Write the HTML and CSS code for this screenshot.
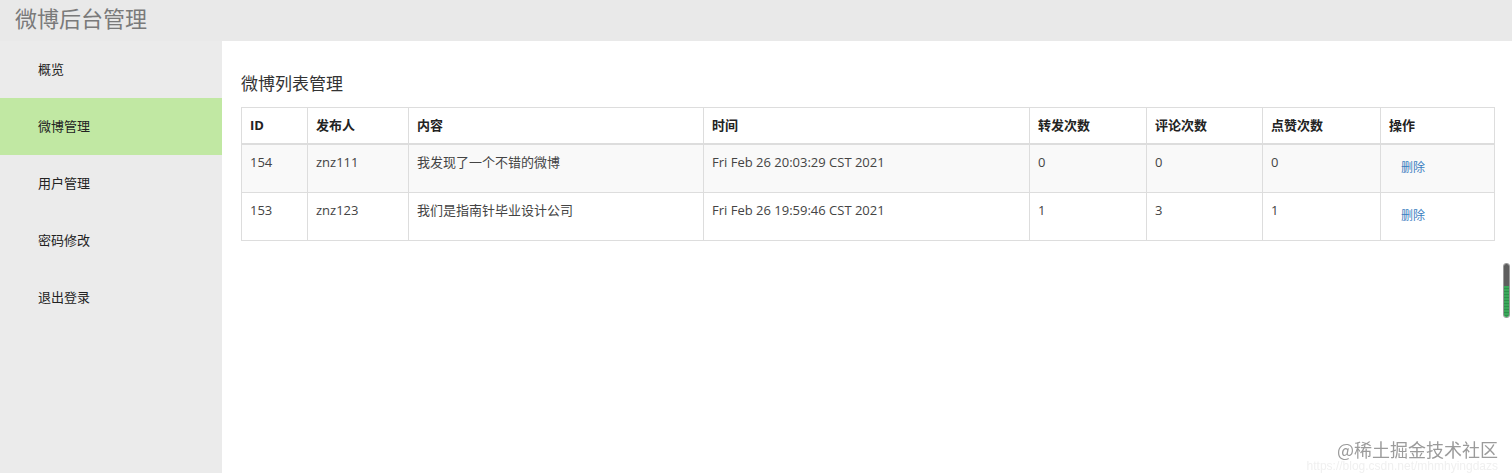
FILE: index.html
```html
<!DOCTYPE html>
<html lang="zh">
<head>
<meta charset="utf-8">
<title>微博后台管理</title>
<link rel="stylesheet" href="styles.css">
</head>
<body>
<header class="topbar"><span class="brand">微博后台管理</span></header>
<div class="layout">
  <nav class="sidebar">
    <a class="nav-item">概览</a>
    <a class="nav-item active">微博管理</a>
    <a class="nav-item">用户管理</a>
    <a class="nav-item">密码修改</a>
    <a class="nav-item">退出登录</a>
  </nav>
  <main class="content">
    <h2 class="page-title">微博列表管理</h2>
    <table class="data-table">
      <colgroup>
        <col class="c-id"><col class="c-user"><col class="c-text"><col class="c-time">
        <col class="c-n1"><col class="c-n2"><col class="c-n3"><col class="c-op">
      </colgroup>
      <thead>
        <tr><th>ID</th><th>发布人</th><th>内容</th><th>时间</th><th>转发次数</th><th>评论次数</th><th>点赞次数</th><th>操作</th></tr>
      </thead>
      <tbody>
        <tr class="odd"><td>154</td><td>znz111</td><td>我发现了一个不错的微博</td><td>Fri Feb 26 20:03:29 CST 2021</td><td>0</td><td>0</td><td>0</td><td><button class="btn-link">删除</button></td></tr>
        <tr><td>153</td><td>znz123</td><td>我们是指南针毕业设计公司</td><td>Fri Feb 26 19:59:46 CST 2021</td><td>1</td><td>3</td><td>1</td><td><button class="btn-link">删除</button></td></tr>
      </tbody>
    </table>
  </main>
</div>
<div class="scroll-thumb"><span class="thumb-top"></span><span class="thumb-bottom"></span></div>
<div class="watermark"><span class="wm-main">@稀土掘金技术社区</span><span class="wm-url">https://blog.csdn.net/mhmhyingdazs</span></div>
</body>
</html>
```
FILE: styles.css
```css
html, body {
  margin: 0;
  padding: 0;
  height: 100%;
  overflow: hidden;
}
body {
  font-family: "Open Sans", "Noto Sans CJK SC", sans-serif;
  color: #333;
  background: #fff;
  display: flex;
  flex-direction: column;
}
.topbar {
  height: 41px;
  background: #e9e9e9;
  display: flex;
  align-items: center;
  padding-left: 15px;
  flex-shrink: 0;
}
.brand {
  font-size: 22px;
  color: #7a7a7a;
  line-height: 30px;
  margin-top: -6px;
}
.layout {
  flex: 1;
  display: flex;
  min-height: 0;
}
.sidebar {
  width: 222px;
  background: #ebebeb;
  display: flex;
  flex-direction: column;
  flex-shrink: 0;
}
.nav-item {
  height: 57px;
  display: flex;
  align-items: center;
  padding-left: 38px;
  padding-bottom: 2px;
  box-sizing: border-box;
  font-size: 13px;
  color: #222;
  text-decoration: none;
}
.nav-item.active {
  background: #c1e8a3;
}
.content {
  flex: 1;
  padding: 0 17px 0 19px;
}
.page-title {
  margin: 30px 0 0;
  height: 36px;
  font-size: 17px;
  font-weight: normal;
  line-height: 26px;
  color: #333;
}
.data-table {
  width: 100%;
  border-collapse: collapse;
  table-layout: fixed;
  font-size: 13px;
  border: 1px solid #dddddd;
}
.c-id { width: 66px; }
.c-user { width: 101px; }
.c-text { width: 295px; }
.c-time { width: 326px; }
.c-n1 { width: 117px; }
.c-n2 { width: 116px; }
.c-n3 { width: 118px; }
.c-op { width: auto; }
.data-table th,
.data-table td {
  border: 1px solid #dddddd;
  padding: 8px;
  text-align: left;
  vertical-align: top;
  line-height: 18px;
}
.data-table th {
  font-weight: 700;
  color: #222;
  border-bottom: 2px solid #dddddd;
  padding: 8px 8px 9px;
}
.data-table td {
  color: #444;
  height: 31px;
}
.data-table tr.odd td {
  background: #f9f9f9;
}
.btn-link {
  border: 0;
  background: none;
  font: inherit;
  font-size: 12px;
  color: #3a7dbf;
  padding: 6px 12px;
  line-height: 18px;
  cursor: pointer;
}
.scroll-thumb {
  position: fixed;
  right: 2px;
  top: 263px;
  width: 7px;
  height: 55px;
  border-radius: 3px;
  overflow: hidden;
  display: flex;
  flex-direction: column;
  border: 1px solid #9a9a9a;
  box-sizing: border-box;
}
.thumb-top {
  flex: 0 0 22px;
  background: #5e5e5e;
}
.thumb-bottom {
  flex: 1;
  background: repeating-linear-gradient(#3aa85a 0 2px, #2f8f4c 2px 3px);
}
.watermark {
  position: fixed;
  right: 14px;
  bottom: 0;
  display: flex;
  flex-direction: column;
  align-items: flex-end;
}
.wm-main {
  font-size: 18px;
  line-height: 22px;
  color: #9b9b9b;
  white-space: nowrap;
  font-family: "Noto Sans CJK SC", sans-serif;
}
.wm-url {
  font-family: "Liberation Sans", sans-serif;
  font-size: 12px;
  line-height: 13px;
  color: #f0f0f0;
  white-space: nowrap;
}
```
